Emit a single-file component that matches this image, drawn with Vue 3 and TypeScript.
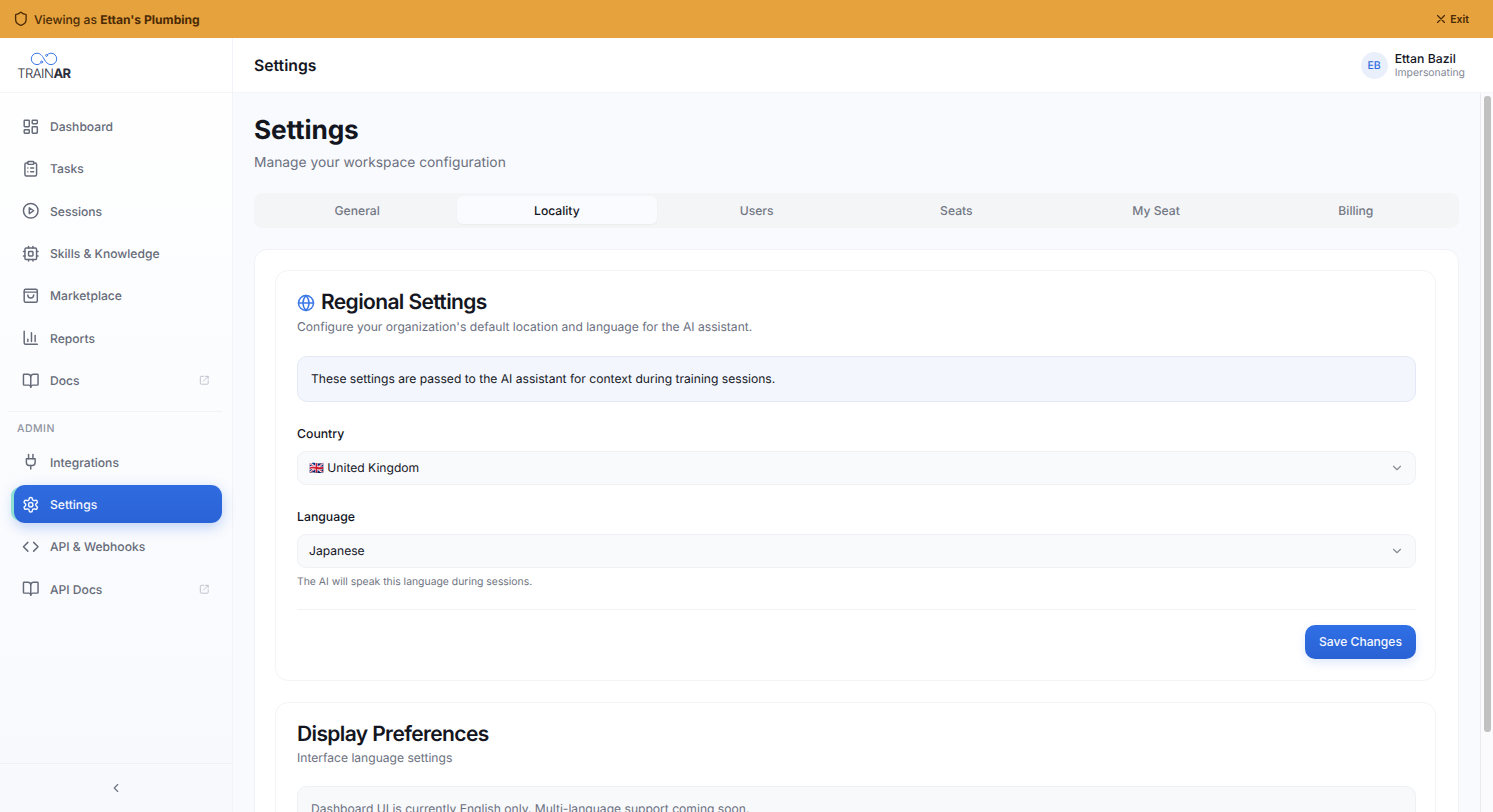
<script setup lang="ts">
interface NavItem {
  label: string;
  icon: string;
  external?: boolean;
  active?: boolean;
}

const mainNav: NavItem[] = [
  { label: 'Dashboard', icon: 'dashboard' },
  { label: 'Tasks', icon: 'tasks' },
  { label: 'Sessions', icon: 'sessions' },
  { label: 'Skills & Knowledge', icon: 'chip' },
  { label: 'Marketplace', icon: 'bag' },
  { label: 'Reports', icon: 'chart' },
  { label: 'Docs', icon: 'book', external: true },
];

const adminNav: NavItem[] = [
  { label: 'Integrations', icon: 'plug' },
  { label: 'Settings', icon: 'gear', active: true },
  { label: 'API & Webhooks', icon: 'code' },
  { label: 'API Docs', icon: 'book', external: true },
];

const tabs = ['General', 'Locality', 'Users', 'Seats', 'My Seat', 'Billing'];

const iconPaths: Record<string, string[]> = {
  dashboard: [
    'M4 3h5a1 1 0 0 1 1 1v7a1 1 0 0 1-1 1H4a1 1 0 0 1-1-1V4a1 1 0 0 1 1-1z',
    'M15 3h5a1 1 0 0 1 1 1v3a1 1 0 0 1-1 1h-5a1 1 0 0 1-1-1V4a1 1 0 0 1 1-1z',
    'M15 12h5a1 1 0 0 1 1 1v7a1 1 0 0 1-1 1h-5a1 1 0 0 1-1-1v-7a1 1 0 0 1 1-1z',
    'M4 16h5a1 1 0 0 1 1 1v3a1 1 0 0 1-1 1H4a1 1 0 0 1-1-1v-3a1 1 0 0 1 1-1z',
  ],
  tasks: [
    'M9 2h6a1 1 0 0 1 1 1v2a1 1 0 0 1-1 1H9a1 1 0 0 1-1-1V3a1 1 0 0 1 1-1z',
    'M16 4h2a2 2 0 0 1 2 2v14a2 2 0 0 1-2 2H6a2 2 0 0 1-2-2V6a2 2 0 0 1 2-2h2',
    'M12 11h4',
    'M12 16h4',
    'M8 11h.01',
    'M8 16h.01',
  ],
  sessions: [
    'M12 2a10 10 0 1 0 0 20 10 10 0 0 0 0-20z',
    'M10 8l6 4-6 4z',
  ],
  chip: [
    'M6 4h12a2 2 0 0 1 2 2v12a2 2 0 0 1-2 2H6a2 2 0 0 1-2-2V6a2 2 0 0 1 2-2z',
    'M10 9h4a1 1 0 0 1 1 1v4a1 1 0 0 1-1 1h-4a1 1 0 0 1-1-1v-4a1 1 0 0 1 1-1z',
    'M15 2v2', 'M15 20v2', 'M2 15h2', 'M2 9h2', 'M20 15h2', 'M20 9h2', 'M9 2v2', 'M9 20v2',
  ],
  bag: [
    'M5 3h14a2 2 0 0 1 2 2v14a2 2 0 0 1-2 2H5a2 2 0 0 1-2-2V5a2 2 0 0 1 2-2z',
    'M3 7h18',
    'M16 11a4 4 0 0 1-8 0',
  ],
  chart: [
    'M3 3v16a2 2 0 0 0 2 2h16',
    'M18 17V9',
    'M13 17V5',
    'M8 17v-3',
  ],
  book: [
    'M12 7v14',
    'M3 18a1 1 0 0 1-1-1V4a1 1 0 0 1 1-1h5a4 4 0 0 1 4 4 4 4 0 0 1 4-4h5a1 1 0 0 1 1 1v13a1 1 0 0 1-1 1h-6a3 3 0 0 0-3 3 3 3 0 0 0-3-3z',
  ],
  plug: [
    'M12 22v-5',
    'M9 8V2',
    'M15 8V2',
    'M18 8v5a4 4 0 0 1-4 4h-4a4 4 0 0 1-4-4V8z',
  ],
  gear: [
    'M12.22 2h-.44a2 2 0 0 0-2 2v.18a2 2 0 0 1-1 1.73l-.43.25a2 2 0 0 1-2 0l-.15-.08a2 2 0 0 0-2.73.73l-.22.38a2 2 0 0 0 .73 2.73l.15.1a2 2 0 0 1 1 1.72v.51a2 2 0 0 1-1 1.74l-.15.09a2 2 0 0 0-.73 2.73l.22.38a2 2 0 0 0 2.73.73l.15-.08a2 2 0 0 1 2 0l.43.25a2 2 0 0 1 1 1.73V20a2 2 0 0 0 2 2h.44a2 2 0 0 0 2-2v-.18a2 2 0 0 1 1-1.73l.43-.25a2 2 0 0 1 2 0l.15.08a2 2 0 0 0 2.73-.73l.22-.39a2 2 0 0 0-.73-2.73l-.15-.08a2 2 0 0 1-1-1.74v-.5a2 2 0 0 1 1-1.74l.15-.09a2 2 0 0 0 .73-2.73l-.22-.38a2 2 0 0 0-2.73-.73l-.15.08a2 2 0 0 1-2 0l-.43-.25a2 2 0 0 1-1-1.73V4a2 2 0 0 0-2-2z',
    'M12 9a3 3 0 1 0 0 6 3 3 0 0 0 0-6z',
  ],
  code: ['M16 18l6-6-6-6', 'M8 6l-6 6 6 6'],
};
</script>

<template>
  <div class="app">
    <div class="banner">
      <div class="banner-left">
        <svg class="banner-shield" viewBox="0 0 24 24" fill="none" stroke="currentColor" stroke-width="2" stroke-linecap="round" stroke-linejoin="round">
          <path d="M20 13c0 5-3.5 7.5-7.66 8.95a1 1 0 0 1-.67-.01C7.5 20.5 4 18 4 13V6a1 1 0 0 1 1-1c2 0 4.5-1.2 6.24-2.72a1.17 1.17 0 0 1 1.52 0C14.51 3.81 17 5 19 5a1 1 0 0 1 1 1z" />
        </svg>
        <span>Viewing as <strong>Ettan's Plumbing</strong></span>
      </div>
      <button class="exit-btn">
        <svg viewBox="0 0 24 24" fill="none" stroke="currentColor" stroke-width="2" stroke-linecap="round">
          <path d="M18 6L6 18M6 6l12 12" />
        </svg>
        Exit
      </button>
    </div>

    <div class="shell">
      <aside class="sidebar">
        <div class="logo-wrap">
          <div class="logo">
            <svg class="logo-mark" viewBox="0 0 28 14" fill="none" stroke="#3b78e7" stroke-width="1" stroke-linecap="round">
              <path d="M14 7C12 3 10 1.2 7 1.2a5.6 5.6 0 0 0 0 11.4c1.500 0 2.600-.6 3.400-1.400" />
              <path d="M14 7c2 3.600 4 5.600 7 5.600a5.700 5.700 0 0 0 0-11.400c-1.500 0-2.600.6-3.400 1.300" />
              <circle cx="11.600" cy="10" r="1" />
              <circle cx="16.600" cy="3.400" r="1" />
            </svg>
            <div class="logo-text">TRAIN<b>AR</b></div>
          </div>
        </div>

        <div class="nav-scroll">
          <nav class="nav-group">
            <a v-for="item in mainNav" :key="item.label" class="nav-item">
              <svg class="nav-icon" viewBox="0 0 24 24" fill="none" stroke="currentColor" stroke-width="2" stroke-linecap="round" stroke-linejoin="round">
                <path v-for="d in iconPaths[item.icon]" :key="d" :d="d" />
              </svg>
              <span class="nav-label">{{ item.label }}</span>
              <svg v-if="item.external" class="ext-icon" viewBox="0 0 24 24" fill="none" stroke="currentColor" stroke-width="2" stroke-linecap="round" stroke-linejoin="round">
                <path d="M21 13v6a2 2 0 0 1-2 2H5a2 2 0 0 1-2-2V5a2 2 0 0 1 2-2h6" />
                <path d="M15 3h6v6" />
                <path d="M10 14L21 3" />
              </svg>
            </a>
          </nav>

          <div class="nav-divider"></div>
          <div class="nav-heading">ADMIN</div>

          <nav class="nav-group">
            <a
              v-for="item in adminNav"
              :key="item.label"
              class="nav-item"
              :class="{ active: item.active }"
            >
              <svg class="nav-icon" viewBox="0 0 24 24" fill="none" stroke="currentColor" stroke-width="2" stroke-linecap="round" stroke-linejoin="round">
                <path v-for="d in iconPaths[item.icon]" :key="d" :d="d" />
              </svg>
              <span class="nav-label">{{ item.label }}</span>
              <svg v-if="item.external" class="ext-icon" viewBox="0 0 24 24" fill="none" stroke="currentColor" stroke-width="2" stroke-linecap="round" stroke-linejoin="round">
                <path d="M21 13v6a2 2 0 0 1-2 2H5a2 2 0 0 1-2-2V5a2 2 0 0 1 2-2h6" />
                <path d="M15 3h6v6" />
                <path d="M10 14L21 3" />
              </svg>
            </a>
          </nav>
        </div>

        <div class="collapse-row">
          <svg viewBox="0 0 24 24" fill="none" stroke="currentColor" stroke-width="2" stroke-linecap="round" stroke-linejoin="round">
            <path d="M15 18l-6-6 6-6" />
          </svg>
        </div>
      </aside>

      <div class="main">
        <header class="topbar">
          <div class="topbar-title">Settings</div>
          <div class="user">
            <div class="avatar">EB</div>
            <div>
              <div class="user-name">Ettan Bazil</div>
              <div class="user-sub">Impersonating</div>
            </div>
          </div>
        </header>

        <div class="content-row">
          <div class="content">
            <h1 class="page-title">Settings</h1>
            <p class="page-sub">Manage your workspace configuration</p>

            <div class="tabs">
              <div v-for="tab in tabs" :key="tab" class="tab" :class="{ selected: tab === 'Locality' }">{{ tab }}</div>
            </div>

            <div class="outer-card">
              <section class="card">
                <h2 class="card-title">
                  <svg class="globe" viewBox="0 0 24 24" fill="none" stroke="currentColor" stroke-width="2" stroke-linecap="round" stroke-linejoin="round">
                    <circle cx="12" cy="12" r="10" />
                    <path d="M12 2a14.500 14.500 0 0 0 0 20 14.500 14.500 0 0 0 0-20" />
                    <path d="M2 12h20" />
                  </svg>
                  Regional Settings
                </h2>
                <p class="card-sub">Configure your organization's default location and language for the AI assistant.</p>

                <div class="notice">These settings are passed to the AI assistant for context during training sessions.</div>

                <label class="field-label">Country</label>
                <div class="select">
                  <span><span class="flag">🇬🇧</span> United Kingdom</span>
                  <svg viewBox="0 0 24 24" fill="none" stroke="currentColor" stroke-width="2" stroke-linecap="round" stroke-linejoin="round">
                    <path d="M6 9l6 6 6-6" />
                  </svg>
                </div>

                <label class="field-label">Language</label>
                <div class="select">
                  <span>Japanese</span>
                  <svg viewBox="0 0 24 24" fill="none" stroke="currentColor" stroke-width="2" stroke-linecap="round" stroke-linejoin="round">
                    <path d="M6 9l6 6 6-6" />
                  </svg>
                </div>
                <p class="hint">The AI will speak this language during sessions.</p>

                <div class="card-footer">
                  <button class="save-btn">Save Changes</button>
                </div>
              </section>

              <section class="card display-card">
                <h2 class="card-title">Display Preferences</h2>
                <p class="card-sub small-gap">Interface language settings</p>
                <div class="notice muted">Dashboard UI is currently English only. Multi-language support coming soon.</div>
              </section>
            </div>
          </div>

          <div class="scroll-track">
            <div class="scroll-thumb"></div>
          </div>
        </div>
      </div>
    </div>
  </div>
</template>

<style>
html,
body {
  margin: 0;
  height: 100%;
  overflow: hidden;
}
</style>

<style scoped>
* {
  box-sizing: border-box;
}

.app {
  height: 812px;
  display: flex;
  flex-direction: column;
  font-family: Inter, "Liberation Sans", sans-serif;
  text-rendering: geometricPrecision;
  color: #14161f;
  background: #f9fafd;
  overflow: hidden;
}

.banner {
  height: 38px;
  flex-shrink: 0;
  background: #e6a23c;
  color: #4a2a06;
  display: flex;
  align-items: center;
  justify-content: space-between;
  padding: 0 24px 0 13px;
  font-size: 12.1px;
  font-weight: 500;
}

.banner-left {
  display: flex;
  align-items: center;
  gap: 5.25px;
}

.banner-left strong {
  font-weight: 700;
}

.banner-shield {
  width: 15.75px;
  height: 15.75px;
}

.exit-btn {
  display: flex;
  align-items: center;
  gap: 2.5px;
  padding: 0;
  border: none;
  background: none;
  color: inherit;
  font: inherit;
  font-size: 10.5px;
  font-weight: 600;
}

.exit-btn svg {
  width: 14px;
  height: 14px;
}

.shell {
  flex: 1;
  display: flex;
  min-height: 0;
}

.sidebar {
  width: 233px;
  flex-shrink: 0;
  display: flex;
  flex-direction: column;
  background: linear-gradient(180deg, #ffffff 0%, #f7f9fd 100%);
  border-right: 1px solid #f1f3f8;
}

.logo-wrap {
  height: 55px;
  flex-shrink: 0;
  padding: 13.5px 0 0 18px;
  background: #fff;
  border-bottom: 1px solid #f3f5f9;
}

.logo {
  width: 52px;
  display: flex;
  flex-direction: column;
  align-items: center;
}

.logo-mark {
  width: 28px;
  height: 14px;
}

.logo-text {
  margin-top: 1.5px;
  font-size: 13px;
  line-height: 14px;
  font-weight: 300;
  color: #2b2e3a;
  letter-spacing: -0.5px;
  white-space: nowrap;
}

.logo-text b {
  font-weight: 700;
}

.nav-scroll {
  flex: 1;
  padding: 14.5px 10px 0 14px;
}

.nav-group {
  display: flex;
  flex-direction: column;
  gap: 4.35px;
}

.nav-item {
  height: 38px;
  display: flex;
  align-items: center;
  gap: 10.25px;
  padding: 0 13px 0 8.25px;
  border-radius: 11px;
  font-size: 12.1px;
  font-weight: 500;
  color: #656a78;
}

.nav-icon {
  width: 17.5px;
  height: 17.5px;
  flex-shrink: 0;
}

.nav-label {
  flex: 1;
}

.ext-icon {
  width: 10.5px;
  height: 10.5px;
  color: #b9bdc7;
}

.nav-item.active {
  color: #f4f7ff;
  background: linear-gradient(180deg, #2f6be0 0%, #2a63d6 100%);
  box-shadow: -5px 0 0 -2px #8ee0d2, 0 4px 14px rgba(47, 107, 224, 0.3);
}

.nav-divider {
  height: 1px;
  margin: 11.5px 0 0 -6px;
  background: #f0f2f6;
}

.nav-heading {
  margin: 10px 0 8px 3px;
  font-size: 10.5px;
  line-height: 13px;
  font-weight: 500;
  letter-spacing: 0.5px;
  color: #8f94a1;
}

.collapse-row {
  height: 49px;
  flex-shrink: 0;
  display: flex;
  align-items: center;
  justify-content: center;
  border-top: 1px solid #eef1f6;
  color: #6f7480;
}

.collapse-row svg {
  width: 14px;
  height: 14px;
}

.main {
  flex: 1;
  min-width: 0;
  display: flex;
  flex-direction: column;
}

.topbar {
  height: 55px;
  flex-shrink: 0;
  background: #fff;
  display: flex;
  align-items: center;
  justify-content: space-between;
  padding: 0 28px 0 21px;
  border-bottom: 1px solid #f4f5f9;
}

.topbar-title {
  font-size: 15.75px;
  font-weight: 600;
}

.user {
  display: flex;
  align-items: center;
  gap: 7px;
}

.avatar {
  width: 27px;
  height: 27px;
  border-radius: 50%;
  background: #eaf0fb;
  color: #2f6be0;
  font-size: 10.5px;
  font-weight: 500;
  display: flex;
  align-items: center;
  justify-content: center;
}

.user-name {
  font-size: 12.25px;
  font-weight: 500;
  line-height: 14px;
}

.user-sub {
  font-size: 10.4px;
  line-height: 13px;
  color: #848997;
}

.content-row {
  flex: 1;
  min-height: 0;
  display: flex;
}

.content {
  flex: 1;
  min-width: 0;
  overflow: hidden;
  padding: 21px 21px 24px 21px;
}

.scroll-track {
  width: 13px;
  flex-shrink: 0;
  padding: 3px 2.5px 0;
  background: #fbfbfd;
  border-left: 1px solid #e8eaee;
}

.scroll-thumb {
  height: 636px;
  border-radius: 3px;
  background: #c1c1c1;
}

.page-title {
  margin: 0;
  font-size: 26.25px;
  line-height: 34px;
  font-weight: 700;
  letter-spacing: -0.15px;
}

.page-sub {
  margin: 5px 0 0;
  font-size: 13.8px;
  line-height: 20px;
  color: #6b7080;
}

.tabs {
  margin-top: 20px;
  height: 34.5px;
  display: grid;
  grid-template-columns: repeat(6, 1fr);
  padding: 3.25px;
  border-radius: 8px;
  background: #f4f5f7;
}

.tab {
  display: flex;
  align-items: center;
  justify-content: center;
  border-radius: 6px;
  font-size: 12.15px;
  font-weight: 500;
  color: #737885;
}

.tab.selected {
  background: #fafbfe;
  color: #14161f;
  box-shadow: 0 1px 2px rgba(20, 22, 31, 0.04);
}

.outer-card {
  margin-top: 21px;
  padding: 20px 22px 21px 20px;
  background: #fff;
  border: 1px solid #f0f2f6;
  border-radius: 13px;
}

.card {
  padding: 18px 19px 21px 21px;
  background: #fff;
  border: 1px solid #f3f4f7;
  border-radius: 13px;
}

.display-card {
  margin-top: 21px;
}

.card-title {
  margin: 0;
  display: flex;
  align-items: center;
  gap: 6px;
  font-size: 21px;
  line-height: 28px;
  font-weight: 600;
  letter-spacing: -0.62px;
}

.globe {
  width: 18px;
  height: 18px;
  color: #3b78e7;
}

.card-sub {
  margin: 1px 0 0;
  font-size: 12.08px;
  line-height: 18px;
  color: #6b7080;
}

.card-sub.small-gap {
  margin-top: -0.5px;
}

.notice {
  margin-top: 20px;
  height: 46px;
  display: flex;
  align-items: center;
  padding: 0 13px;
  background: #f3f6fc;
  border: 1px solid #e3e9f4;
  border-radius: 10px;
  font-size: 12.1px;
}

.notice.muted {
  margin-top: 19px;
  align-items: flex-start;
  padding-top: 14px;
  background: #f8f9fb;
  border-color: #eef0f4;
  color: #6b7080;
}

.field-label {
  display: block;
  margin-top: 23px;
  font-size: 12.25px;
  line-height: 17px;
  font-weight: 500;
}

.select {
  margin-top: 9px;
  height: 34px;
  display: flex;
  align-items: center;
  justify-content: space-between;
  padding: 0 11px 0 11px;
  background: #f9fafc;
  border: 1px solid #f0f1f5;
  border-radius: 9px;
  font-size: 12.1px;
}

.flag {
  font-size: 12px;
}

.select svg {
  width: 14px;
  height: 14px;
  color: #888c97;
}

.hint {
  margin: 7.5px 0 0;
  font-size: 10.4px;
  line-height: 14px;
  color: #70757f;
}

.card-footer {
  margin-top: 20px;
  padding-top: 14.5px;
  display: flex;
  justify-content: flex-end;
  border-top: 1px solid #f1f2f6;
}

.save-btn {
  height: 34.5px;
  padding: 0 14px;
  border: none;
  border-radius: 10px;
  background: linear-gradient(180deg, #2f6fe6 0%, #2a62d4 100%);
  color: #f4f7ff;
  font: inherit;
  font-size: 12.1px;
  font-weight: 500;
  box-shadow: 0 4px 10px rgba(47, 107, 224, 0.15);
}
</style>
